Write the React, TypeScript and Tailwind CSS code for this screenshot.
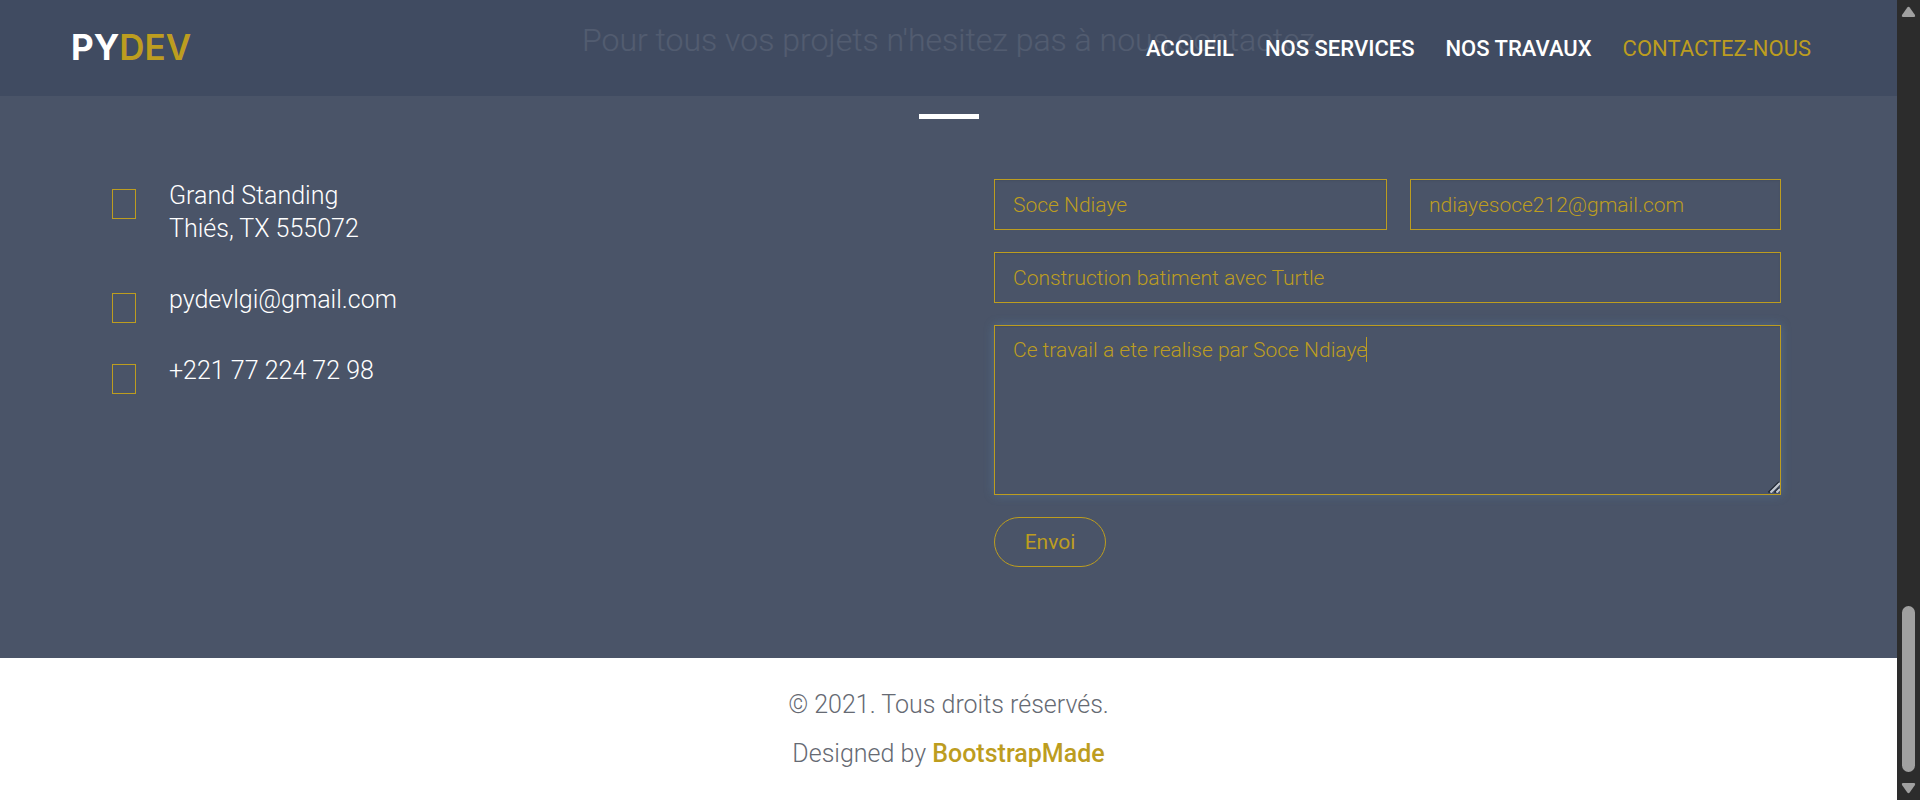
import React from "react";

const navLinks = [
  { label: "ACCUEIL", href: "#accueil", active: false },
  { label: "NOS SERVICES", href: "#services", active: false },
  { label: "NOS TRAVAUX", href: "#travaux", active: false },
  { label: "CONTACTEZ-NOUS", href: "#contact", active: true },
];

const fieldClass =
  "block w-full border border-[#bd9d1f] bg-transparent px-[18px] text-[21px] leading-[30px] font-light text-[#bd9d1f] outline-none";
const inputClass = `${fieldClass} h-[51px] shadow-[inset_0_1px_2px_rgba(0,0,0,0.08)]`;

function Header() {
  return (
    <header className="absolute inset-x-0 top-0 flex h-24 items-center justify-between bg-[#3f4a60]/90 pr-[86px] pl-[71px]">
      <a href="#accueil" className="pb-0.5 font-[Inter,sans-serif] text-[35px] leading-[48px] font-bold text-white">
        PY<span className="font-semibold text-[#bd9d1f]">DEV</span>
      </a>
      <nav className="flex gap-[31px] pt-px text-[22px] leading-[30px]">
        {navLinks.map((link) => (
          <a
            key={link.label}
            href={link.href}
            className={link.active ? "font-normal text-[#bd9d1f]" : "font-medium text-white"}
          >
            {link.label}
          </a>
        ))}
      </nav>
    </header>
  );
}

function ContactItem({ children }: { children: React.ReactNode }) {
  return (
    <div className="flex gap-[33px]">
      <span aria-hidden="true" className="mt-[10px] -mb-2 h-[30px] w-6 shrink-0 border border-[#bd9d1f]" />
      <p>{children}</p>
    </div>
  );
}

function ContactForm() {
  return (
    <form className="flex flex-col gap-[22px]" onSubmit={(e) => e.preventDefault()}>
      <div className="grid grid-cols-[393fr_371fr] gap-[23px]">
        <input aria-label="Nom" type="text" defaultValue="Soce Ndiaye" className={inputClass} />
        <input aria-label="Email" type="email" defaultValue="ndiayesoce212@gmail.com" className={inputClass} />
      </div>
      <input
        aria-label="Sujet"
        type="text"
        defaultValue="Construction batiment avec Turtle"
        className={inputClass}
      />
      <div className="relative">
        <textarea
          aria-label="Message"
          defaultValue="Ce travail a ete realise par Soce Ndiaye"
          className={`${fieldClass} h-[170px] resize-none py-[9px] shadow-[inset_0_1px_1px_rgba(0,0,0,0.08),0_0_10px_rgba(102,175,233,0.25)]`}
        />
        <span aria-hidden="true" className="absolute top-3 left-[372px] h-[25px] w-px bg-[#bd9d1f]" />
        <svg aria-hidden="true" className="absolute right-px bottom-0.5" width="12" height="12" viewBox="0 0 12 12">
          <path d="M.5 11.5L11 1M6.5 11.5L11 7" stroke="#1d2430" strokeWidth="1.6" />
          <path d="M2.5 11.5L12 2M8.5 11.5L12 8" stroke="#c3c8d0" strokeWidth="2.2" />
        </svg>
      </div>
      <button
        type="submit"
        className="h-[50px] w-28 rounded-full border border-[#bd9d1f] text-[21px] leading-[30px] text-[#bd9d1f]"
      >
        Envoi
      </button>
    </form>
  );
}

function ScrollTrack() {
  return (
    <div aria-hidden="true" className="sticky top-0 flex h-screen w-[23px] shrink-0 flex-col items-center bg-[#2c2c2c] py-[6px]">
      <svg width="15" height="12" viewBox="0 0 15 12">
        <path d="M6.3 1.5Q7.5 0 8.7 1.5L14 9Q14.8 11 13 11H2Q.2 11 1 9Z" fill="#a0a0a0" />
      </svg>
      <div className="mt-auto mb-[10px] h-[166px] w-[13px] rounded-full bg-[#a0a0a0]" />
      <svg width="15" height="12" viewBox="0 0 15 12">
        <path d="M6.3 10.5Q7.5 12 8.7 10.5L14 3Q14.8 1 13 1H2Q.2 1 1 3Z" fill="#a0a0a0" />
      </svg>
    </div>
  );
}

export default function App() {
  return (
    <div className="flex min-h-screen bg-white font-[Roboto,sans-serif]">
      <div className="relative min-w-0 flex-1">
        <section id="contact" className="bg-[#4a5468] pt-[19px] pb-[91px] text-white">
          <h3 className="text-center text-[32px] leading-[42px] font-light">
            Pour tous vos projets n'hesitez pas à nous contactez
          </h3>
          <div className="mx-auto mt-[53px] h-[5px] w-[60px] bg-white" />
          <div className="mt-[60px] grid grid-cols-[882fr_787fr] pr-[116px] pl-28">
            <address className="flex flex-col gap-[38px] text-[25px] leading-[33px] font-light not-italic">
              <ContactItem>
                Grand Standing
                <br />
                Thiés, TX 555072
              </ContactItem>
              <ContactItem>pydevlgi@gmail.com</ContactItem>
              <ContactItem>+221 77 224 72 98</ContactItem>
            </address>
            <ContactForm />
          </div>
        </section>
        <footer className="flex flex-col gap-4 py-[30px] text-center text-[25px] leading-[33px] font-light text-[#666a73]">
          <p>© 2021. Tous droits réservés.</p>
          <p>
            Designed by{" "}
            <a href="#bootstrapmade" className="font-medium text-[#bd9d1f]">
              BootstrapMade
            </a>
          </p>
        </footer>
        <Header />
      </div>
      <ScrollTrack />
    </div>
  );
}
